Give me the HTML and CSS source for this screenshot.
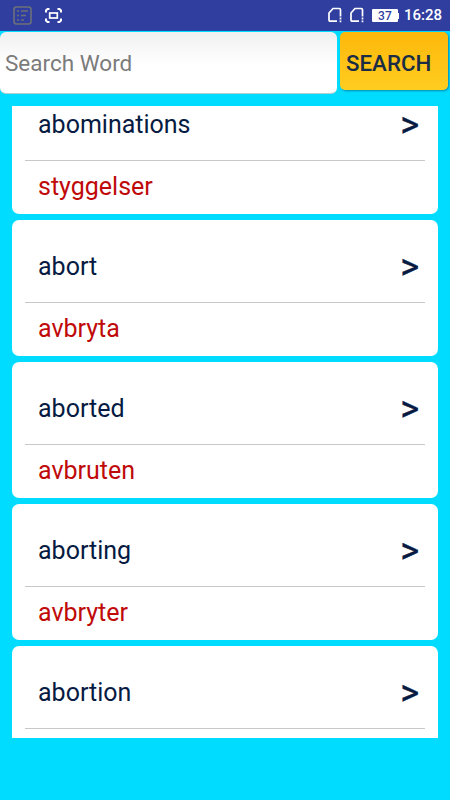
FILE: index.html
```html
<!DOCTYPE html>
<html lang="en">
<head>
    <meta charset="UTF-8">
    <meta name="viewport" content="width=device-width, initial-scale=1.0">
    <title>Dictionary</title>
    <link rel="stylesheet" href="styles.css">
</head>
<body>
    <header class="status-bar">
        <div class="status-left">
            <svg width="19" height="19" viewBox="0 0 19 19" fill="none" stroke="#6d7078" stroke-width="1.6">
                <rect x="1" y="1" width="17" height="17" rx="2.5"/>
                <path d="M4 5h2M8 5h7M4 9.5h2M8 9.5h5M4 14h2M8 14h3"/>
            </svg>
            <svg width="17" height="15" viewBox="0 0 17 15" fill="none" stroke="#fff" stroke-width="2">
                <path d="M1 4.500V2.500L2.500 1H4.500M12.500 1h2L16 2.500v2M16 10.500v2L14.500 14h-2M4.500 14h-2L1 12.500v-2"/>
                <rect x="4.7" y="5" width="7.6" height="5" stroke-width="1.7"/>
            </svg>
        </div>
        <div class="status-right">
            <svg class="sim" width="14" height="16" viewBox="0 0 14 16" fill="none" stroke="#fff" stroke-width="1.7">
                <path d="M9 14.2H2.2Q1 14.2 1 13V6L5 1.5h6.2q1.3 0 1.3 1.3V9.5M12.5 10.5v2M12.5 13.5v1.7"/>
            </svg>
            <svg class="sim" width="14" height="16" viewBox="0 0 14 16" fill="none" stroke="#fff" stroke-width="1.7">
                <path d="M9 14.2H2.2Q1 14.2 1 13V6L5 1.5h6.2q1.3 0 1.3 1.3V9.5M12.5 10.5v2M12.5 13.5v1.7"/>
            </svg>
            <span class="battery">37</span>
            <span class="time">16:28</span>
        </div>
    </header>

    <form class="search">
        <input type="text" class="search-input" placeholder="Search Word">
        <button type="button" class="search-button">SEARCH</button>
    </form>

    <main class="word-list">
        <div class="card">
            <div class="word">abominations <span class="arrow">&gt;</span></div>
            <div class="translation">styggelser</div>
        </div>
        <div class="card">
            <div class="word">abort <span class="arrow">&gt;</span></div>
            <div class="translation">avbryta</div>
        </div>
        <div class="card">
            <div class="word">aborted <span class="arrow">&gt;</span></div>
            <div class="translation">avbruten</div>
        </div>
        <div class="card">
            <div class="word">aborting <span class="arrow">&gt;</span></div>
            <div class="translation">avbryter</div>
        </div>
        <div class="card">
            <div class="word">abortion <span class="arrow">&gt;</span></div>
        </div>
    </main>
</body>
</html>
```

FILE: styles.css
```css
* {
    box-sizing: border-box;
}
body {
    margin: 0;
    height: 100vh;
    overflow: hidden;
    background: #00dcff;
    font-family: Roboto, sans-serif;
}
.status-bar {
    display: flex;
    justify-content: space-between;
    align-items: center;
    height: 31px;
    padding: 0 8px 0 13px;
    background: #303f9f;
    border-bottom: 1px solid #1f4aa8;
    color: #fff;
}
.status-left,
.status-right {
    display: flex;
    align-items: center;
}
.status-left {
    gap: 13px;
}
.sim {
    margin-right: 8px;
}
.battery {
    position: relative;
    width: 26px;
    height: 13px;
    margin-right: 6px;
    border-radius: 1px;
    background: #fff;
    color: #303f9f;
    font-size: 12px;
    font-weight: 500;
    line-height: 14px;
    text-align: center;
}
.battery::after {
    content: "";
    position: absolute;
    top: 4px;
    right: -1px;
    width: 1px;
    height: 6px;
    background: #fff;
}
.time {
    font-size: 15px;
    font-weight: 500;
    line-height: 32px;
}
.search {
    display: flex;
    gap: 3px;
    height: 75px;
}
.search-input {
    width: 337px;
    height: 62px;
    margin: 0.5px 0 0;
    padding: 2px 5px 0;
    border: none;
    border-bottom: 1px solid #b5cdd2;
    border-radius: 6px;
    background: linear-gradient(#f0f0f0, #fff 55%);
    font-family: inherit;
    font-size: 22.5px;
}
.search-input::placeholder {
    color: #7b7b7b;
}
.search-button {
    width: 108px;
    height: 58px;
    margin-top: 1px;
    padding: 4px 0 0 6px;
    border: none;
    border-radius: 5px;
    background: linear-gradient(#fdb80b, #ffcd20);
    box-shadow: 1px 1px 2px rgba(0, 60, 90, 0.5);
    color: #1b2d45;
    font-family: inherit;
    font-size: 22.3px;
    font-weight: 500;
    text-align: left;
}
.word-list {
    height: 632px;
    margin: 0 12px;
    overflow: hidden;
}
.card {
    height: 136px;
    margin-bottom: 6px;
    padding: 0 13px;
    border-radius: 7px;
    background: #fff;
    font-size: 25px;
}
/* the list is scrolled, so the first card is cut off at the top */
.card:first-child {
    margin-top: -27.6px;
}
.word {
    display: flex;
    justify-content: space-between;
    height: 82.5px;
    padding: 0 6px 0 13px;
    border-bottom: 1px solid #c8c8c8;
    color: #061a42;
    line-height: 93px;
}
.arrow {
    font-size: 36px;
    line-height: 95px;
    -webkit-text-stroke: 0.4px #061a42;
}
.translation {
    padding-left: 13px;
    color: #c00a0a;
    line-height: 51px;
}
```
